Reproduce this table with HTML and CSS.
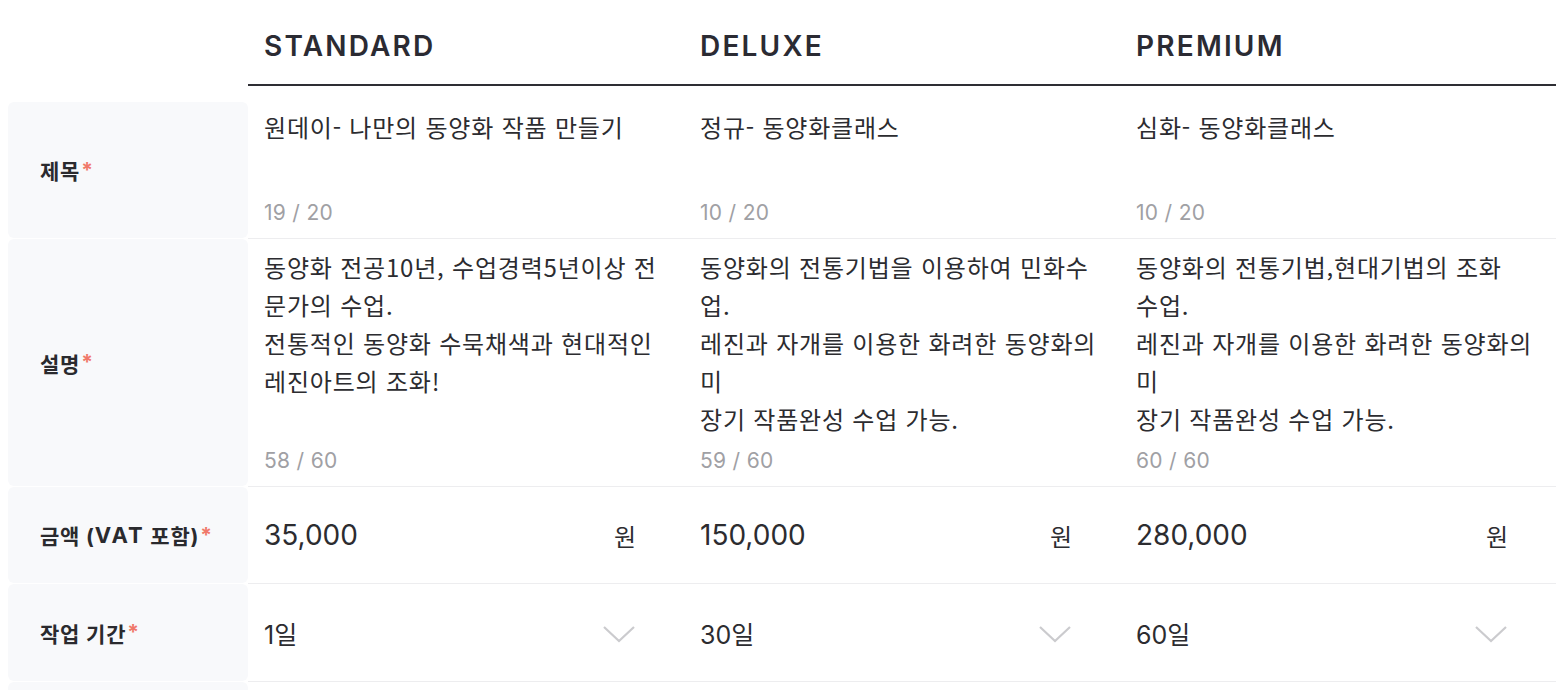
FILE: index.html
```html
<!DOCTYPE html>
<html lang="ko">
<head>
<meta charset="utf-8">
<title>패키지</title>
<link rel="stylesheet" href="styles.css">
</head>
<body>
<div class="table">
  <div class="corner"></div>
  <div class="head">STANDARD</div>
  <div class="head">DELUXE</div>
  <div class="head">PREMIUM</div>

  <div class="label label-first">제목<em>*</em></div>
  <div class="cell cell-title"><p class="text">원데이- 나만의 동양화 작품 만들기</p><span class="count">19 / 20</span></div>
  <div class="cell cell-title"><p class="text">정규- 동양화클래스</p><span class="count">10 / 20</span></div>
  <div class="cell cell-title"><p class="text">심화- 동양화클래스</p><span class="count">10 / 20</span></div>

  <div class="label">설명<em>*</em></div>
  <div class="cell cell-desc"><p class="text">동양화 전공10년, 수업경력5년이상 전문가의 수업.
전통적인 동양화 수묵채색과 현대적인 레진아트의 조화!</p><span class="count">58 / 60</span></div>
  <div class="cell cell-desc"><p class="text">동양화의 전통기법을 이용하여 민화수업.
레진과 자개를 이용한 화려한 동양화의미
장기 작품완성 수업 가능.</p><span class="count">59 / 60</span></div>
  <div class="cell cell-desc"><p class="text">동양화의 전통기법,현대기법의 조화
수업.
레진과 자개를 이용한 화려한 동양화의미
장기 작품완성 수업 가능.</p><span class="count">60 / 60</span></div>

  <div class="label">금액 (<span class="lat">VAT</span> 포함)<em>*</em></div>
  <div class="cell cell-inline"><span class="price">35,000</span><span class="unit">원</span></div>
  <div class="cell cell-inline"><span class="price">150,000</span><span class="unit">원</span></div>
  <div class="cell cell-inline"><span class="price">280,000</span><span class="unit">원</span></div>

  <div class="label">작업 기간<em>*</em></div>
  <div class="cell cell-inline cell-dur"><span class="days">1일</span><svg class="chev" width="34" height="20" viewBox="0 0 34 20"><polyline points="2,3 17,17 32,3" fill="none" stroke="#cbcbce" stroke-width="2.2"/></svg></div>
  <div class="cell cell-inline cell-dur"><span class="days">30일</span><svg class="chev" width="34" height="20" viewBox="0 0 34 20"><polyline points="2,3 17,17 32,3" fill="none" stroke="#cbcbce" stroke-width="2.2"/></svg></div>
  <div class="cell cell-inline cell-dur"><span class="days">60일</span><svg class="chev" width="34" height="20" viewBox="0 0 34 20"><polyline points="2,3 17,17 32,3" fill="none" stroke="#cbcbce" stroke-width="2.2"/></svg></div>

  <div class="label label-filler"></div>
  <div class="filler"></div>
  <div class="filler"></div>
  <div class="filler"></div>
</div>
</body>
</html>
```

FILE: styles.css
```css
html, body {
  margin: 0;
  padding: 0;
  background: #ffffff;
  overflow: hidden;
}

body {
  font-family: "Inter", "Noto Sans CJK KR", sans-serif;
  color: #2c2c30;
}

.table {
  margin: 0 8px;
  display: grid;
  grid-template-columns: 240px repeat(3, 436px);
}

.head {
  height: 86px;
  box-sizing: border-box;
  padding: 8px 0 0 16px;
  display: flex;
  align-items: center;
  font-size: 28px;
  font-weight: 600;
  letter-spacing: 2.2px;
  color: #2b2b33;
  border-bottom: 2px solid #2e2e34;
}

.label {
  background: #f8f9fb;
  border-radius: 6px;
  padding-left: 32px;
  display: flex;
  align-items: center;
  font-size: 21px;
  font-weight: 700;
  letter-spacing: 0.8px;
  color: #2a2a2e;
  margin-bottom: 1px;
  white-space: pre;
}

.label .lat {
  letter-spacing: 2px;
  font-size: 22px;
}

.label em {
  font-style: normal;
  color: #f0786a;
  font-weight: 700;
  margin-left: 1px;
}

.label-first {
  margin-top: 16px;
}

.label-filler {
  height: 8px;
  margin-bottom: 0;
  border-radius: 6px 6px 0 0;
}

.cell {
  box-sizing: border-box;
  border-bottom: 1px solid #ededef;
  padding-left: 16px;
}

.cell-title,
.cell-desc {
  display: flex;
  flex-direction: column;
  justify-content: space-between;
  padding-right: 14px;
}

.cell-title {
  height: 153px;
  padding-top: 22px;
  padding-bottom: 13px;
}

.cell-desc {
  height: 248px;
  padding-top: 9px;
  padding-bottom: 13px;
}

.text {
  margin: 0;
  font-family: "Noto Sans CJK KR", sans-serif;
  font-size: 24px;
  letter-spacing: 0.8px;
  line-height: 38px;
  color: #2c2c30;
  white-space: pre-line;
}

.count {
  font-size: 21px;
  line-height: 24px;
  letter-spacing: 0.3px;
  color: #a0a0a4;
}

.cell-inline {
  display: flex;
  align-items: center;
  justify-content: space-between;
  padding-right: 48px;
  height: 97px;
}

.cell-dur {
  height: 98px;
}

.price {
  font-size: 28px;
  color: #2c2c30;
}

.unit {
  font-family: "Noto Sans CJK KR", sans-serif;
  font-size: 24px;
  color: #2c2c30;
}

.days {
  font-family: "Inter", "Noto Sans CJK KR", sans-serif;
  font-size: 25px;
  color: #2c2c30;
}

.chev {
  display: block;
  margin-top: 2px;
}

.filler {
  height: 8px;
}
```
